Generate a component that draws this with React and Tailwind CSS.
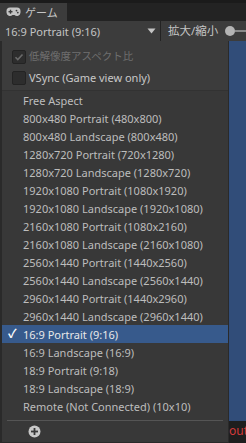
const sizes = [
  'Free Aspect',
  '800x480 Portrait (480x800)',
  '800x480 Landscape (800x480)',
  '1280x720 Portrait (720x1280)',
  '1280x720 Landscape (1280x720)',
  '1920x1080 Portrait (1080x1920)',
  '1920x1080 Landscape (1920x1080)',
  '2160x1080 Portrait (1080x2160)',
  '2160x1080 Landscape (2160x1080)',
  '2560x1440 Portrait (1440x2560)',
  '2560x1440 Landscape (2560x1440)',
  '2960x1440 Portrait (1440x2960)',
  '2960x1440 Landscape (2960x1440)',
  '16:9 Portrait (9:16)',
  '16:9 Landscape (16:9)',
  '18:9 Portrait (9:18)',
  '18:9 Landscape (18:9)',
  'Remote (Not Connected) (10x10)',
];

const selected = '16:9 Portrait (9:16)';

const GamepadIcon = () => (
  <svg width="15" height="10" viewBox="0 0 15 10">
    <path
      d="M4 0.5h7a3.5 3.5 0 0 1 3.5 3.5v1.5a3.5 3.5 0 0 1-6 2.4h-2a3.5 3.5 0 0 1-6-2.4V4A3.5 3.5 0 0 1 4 0.5z"
      fill="#c4c4c4"
    />
    <rect x="2.5" y="4" width="4" height="1.4" fill="#3c3c3c" />
    <rect x="3.8" y="2.7" width="1.4" height="4" fill="#3c3c3c" />
    <circle cx="10.5" cy="3.6" r="0.9" fill="#3c3c3c" />
    <circle cx="11.8" cy="5.6" r="0.9" fill="#3c3c3c" />
  </svg>
);

const Checkbox = ({ checked, disabled, label }) => (
  <div className="flex items-center h-[21px] pl-[10px] gap-[3px]">
    <div className="w-[14px] h-[14px] rounded-[2px] bg-[#2d2d2d] border border-[#232323] flex items-center justify-center">
      {checked && (
        <svg width="10" height="10" viewBox="0 0 10 10">
          <path d="M1.5 5.2l2.3 2.3 4.7-5" stroke="#6a6a6a" strokeWidth="1.6" fill="none" />
        </svg>
      )}
    </div>
    <span className={disabled ? 'text-[#6f6f6f] text-[10.5px]' : 'text-[#c8c8c8]'}>{label}</span>
  </div>
);

export default function App() {
  return (
    <div
      className="w-[246px] h-[443px] overflow-hidden flex flex-col bg-[#282828] text-[11px] leading-none"
      style={{ fontFamily: '"Noto Sans", "Noto Sans CJK JP", sans-serif' }}
    >
      {/* タブ */}
      <div className="h-[21px] flex items-end bg-[#232323] border-t-[3px] border-[#1b1b1b]">
        <div className="h-[18px] w-[67px] bg-[#3c3c3c] flex items-center gap-[4px] pl-[6px] text-[#c4c4c4]">
          <GamepadIcon />
          <span>ゲーム</span>
        </div>
      </div>

      {/* ツールバー */}
      <div className="h-[20px] flex items-center bg-[#3c3c3c] text-[#c4c4c4] whitespace-nowrap">
        <div className="w-[160px] shrink-0 h-full flex items-center justify-between pl-[5px] pr-[4px]">
          <span>16:9 Portrait (9:16)</span>
          <svg width="9" height="6" viewBox="0 0 9 6">
            <path d="M0.5 0.5h8L4.5 5.5z" fill="#c4c4c4" />
          </svg>
        </div>
        <div className="w-px shrink-0 h-full bg-[#232323]" />
        <div className="flex items-center pl-[7px] gap-[7px] shrink-0">
          <span className="text-[11.5px]">拡大/縮小</span>
          <div className="flex items-center">
            <div className="w-[10px] h-[10px] rounded-full bg-[#b4b4b4]" />
            <div className="w-[20px] h-[2px] bg-[#8a8a8a]" />
          </div>
        </div>
      </div>

      <div className="flex-1 flex">
        {/* ドロップダウンメニュー */}
        <div className="w-[229px] shrink-0 flex flex-col bg-[#383838] border-l-2 border-r border-b border-[#2a2a2a]">
          <div className="bg-[#3c3c3c] pt-[5px] pb-[2px] border-b border-[#323232]">
            <Checkbox checked disabled label="低解像度アスペクト比" />
            <Checkbox label="VSync (Game view only)" />
          </div>
          <div>
            {sizes.map((s) => (
              <div
                key={s}
                className={`h-[18px] flex items-center relative pl-[21px] whitespace-nowrap ${
                  s === selected ? 'bg-[#375a8c] text-[#e8e8e8]' : 'text-[#bdbdbd]'
                }`}
              >
                {s === selected && (
                  <span className="absolute left-[6px] text-[12px] font-bold text-white">✓</span>
                )}
                {s}
              </div>
            ))}
          </div>
          <div className="mx-[5px] mt-[5px] h-px bg-[#555555]" />
          <div className="flex-1 flex items-center pl-[26px]">
            <svg width="13" height="13" viewBox="0 0 13 13">
              <circle cx="6.5" cy="6.5" r="6" fill="#c8c8c8" />
              <rect x="3" y="5.6" width="7" height="1.8" fill="#383838" />
              <rect x="5.6" y="3" width="1.8" height="7" fill="#383838" />
            </svg>
          </div>
        </div>

        {/* ゲームビュー */}
        <div className="flex-1 flex flex-col">
          <div className="flex-1 bg-[#314d79]" />
          <div className="h-[22px] bg-[#1e1e1e] pt-[4px] text-[12px] text-[#d33a3a] overflow-hidden">
            out
          </div>
        </div>
      </div>
    </div>
  );
}
